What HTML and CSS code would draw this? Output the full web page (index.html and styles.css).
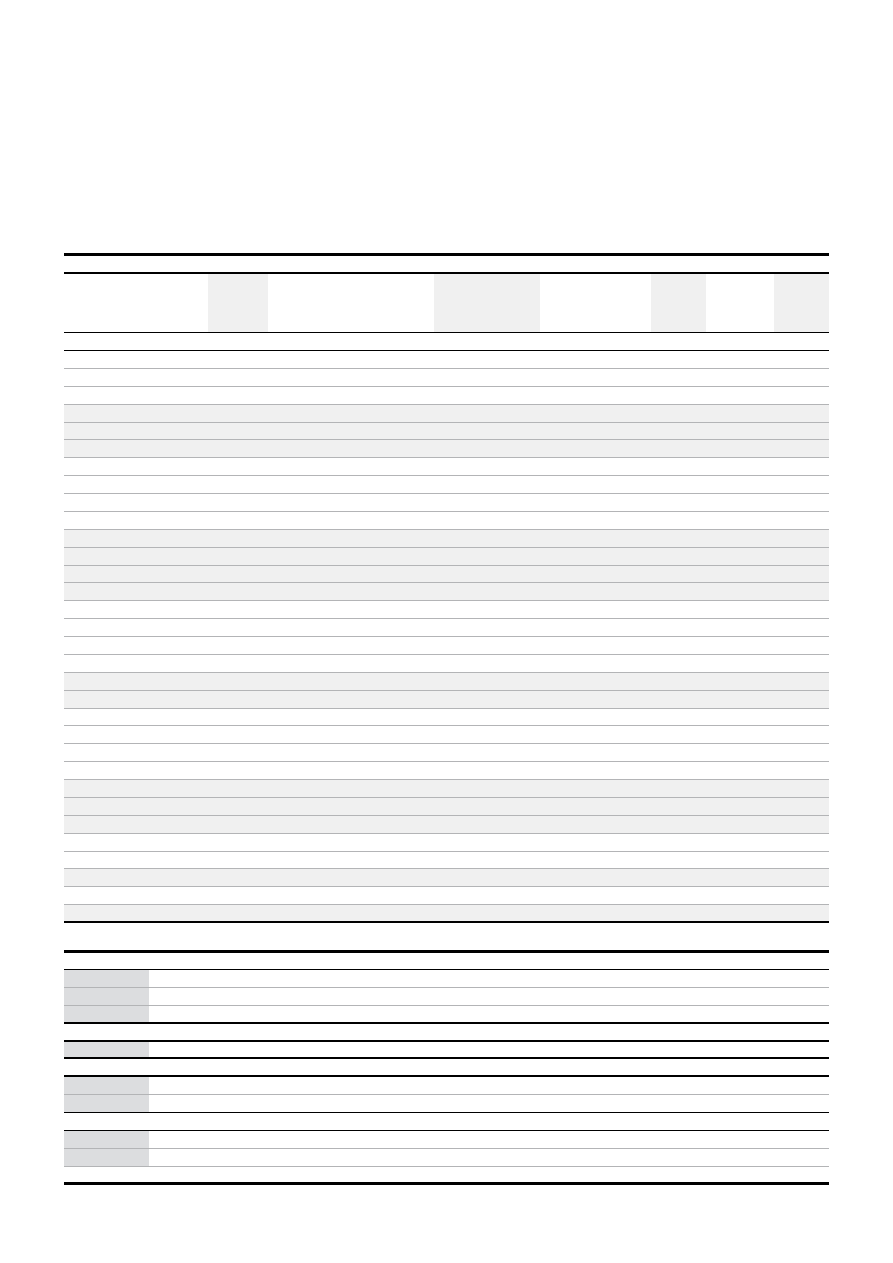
FILE: index.html
```html
<!DOCTYPE html>
<html lang="en">
<head>
<meta charset="utf-8">
<title>Table</title>
<link rel="stylesheet" href="styles.css">
</head>
<body>
<main class="page">
  <section class="main-table">
    <div class="title-row"></div>
    <div class="head">
      <div class="hc"></div><div class="hc alt"></div><div class="hc"></div><div class="hc alt"></div>
      <div class="hc"></div><div class="hc alt"></div><div class="hc"></div><div class="hc alt"></div>
    </div>
    <div class="subhead"></div>
    <div class="body">
      <div class="row"></div><div class="row"></div><div class="row"></div>
      <div class="row shade"></div><div class="row shade"></div><div class="row shade"></div>
      <div class="row"></div><div class="row"></div><div class="row"></div><div class="row"></div>
      <div class="row shade"></div><div class="row shade"></div><div class="row shade"></div><div class="row shade"></div>
      <div class="row"></div><div class="row"></div><div class="row"></div><div class="row"></div>
      <div class="row shade"></div><div class="row shade"></div>
      <div class="row"></div><div class="row"></div><div class="row"></div><div class="row"></div>
      <div class="row shade"></div><div class="row shade"></div><div class="row shade"></div>
      <div class="row"></div><div class="row"></div>
      <div class="row shade"></div>
      <div class="row"></div>
      <div class="row shade last"></div>
    </div>
  </section>

  <section class="sub-table">
    <div class="sub-head"></div>
    <div class="brow"><div class="label"></div><div class="val"></div></div>
    <div class="brow"><div class="label"></div><div class="val"></div></div>
    <div class="brow dark2"><div class="label"></div><div class="val"></div></div>
    <div class="brow dark2"><div class="val"></div></div>
    <div class="brow dark2"><div class="label"></div><div class="val"></div></div>
    <div class="brow dark2"><div class="val"></div></div>
    <div class="brow"><div class="label"></div><div class="val"></div></div>
    <div class="brow dark1"><div class="label"></div><div class="val"></div></div>
    <div class="brow dark1"><div class="val"></div></div>
    <div class="brow"><div class="label"></div><div class="val"></div></div>
    <div class="brow"><div class="label"></div><div class="val"></div></div>
    <div class="brow end"><div class="val"></div></div>
  </section>
</main>
</body>
</html>
```

FILE: styles.css
```css
* { box-sizing: border-box; }

html, body {
  margin: 0;
  padding: 0;
  background: #ffffff;
  font-family: "Liberation Sans", Arial, sans-serif;
}

.page {
  padding: 253px 64px 40px;
}

.main-table {
  display: flex;
  flex-direction: column;
}

.title-row {
  height: 19px;
  border-top: 3px solid #000;
}

.head {
  display: grid;
  grid-template-columns: 144px 60px 166px 106px 111px 55px 68px 55px;
  height: 61px;
  border-top: 2px solid #000;
  border-bottom: 1px solid #000;
}

.hc.alt {
  background: #f0f0f0;
}

.subhead {
  height: 18px;
  border-bottom: 1px solid #000;
}

.body {
  display: flex;
  flex-direction: column;
}

.row {
  height: 17.875px;
  border-bottom: 1px solid #b3b4b6;
}

.row.shade {
  background: #f0f0f0;
}

.row.last {
  border-bottom: 2px solid #000;
}

.sub-table {
  margin-top: 27px;
  display: flex;
  flex-direction: column;
}

.sub-head {
  height: 20px;
  border-top: 3px solid #000;
  border-bottom: 1px solid #000;
}

.brow {
  display: grid;
  grid-template-columns: 85px 1fr;
  height: 17.875px;
  border-bottom: 1px solid #b3b4b6;
}

.brow .label {
  background: #dcdddf;
}

.brow > .val:only-child {
  grid-column: 1 / -1;
}

.brow.dark2 {
  border-bottom: 2px solid #000;
}

.brow.dark1 {
  border-bottom: 1px solid #000;
}

.brow.end {
  border-bottom: 3px solid #000;
}
```
